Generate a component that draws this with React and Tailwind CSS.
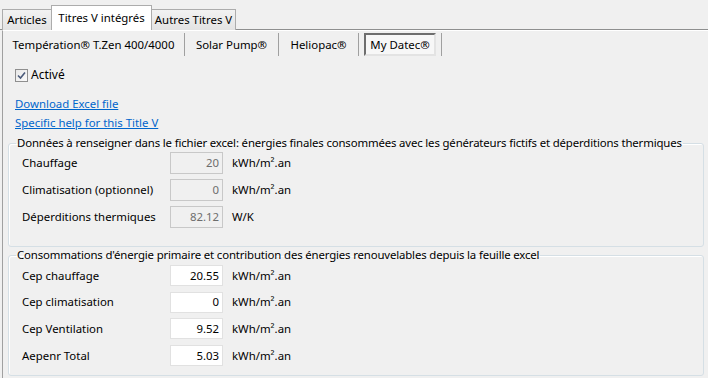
import React from "react";

function Field({ label, value, unit, disabled, h }) {
  return (
    <div className={`flex items-center ${h}`}>
      <div className="w-[148px] shrink-0">{label}</div>
      <div
        className={`w-[53px] h-full flex items-center justify-end pr-[3px] border ${
          disabled
            ? "bg-[#f0f0f0] border-[#c8c8c8] text-[#6d6d6d]"
            : "bg-white border-[#e1e1e1] text-black"
        }`}
      >
        {value}
      </div>
      <div className="ml-[9px]">{unit}</div>
    </div>
  );
}

export default function App() {
  const font = { fontFamily: '"Noto Sans", "Open Sans", sans-serif' };
  return (
    <div
      className="w-[708px] h-[378px] bg-[#f0f0f0] overflow-hidden text-[11.4px] text-black leading-[16px] flex flex-col"
      style={font}
    >
      {/* Top tabs */}
      <div className="h-[30px] shrink-0 flex items-end pl-[2px] border-b border-[#8e8f8f]">
        <div className="w-[50px] h-[21px] -mb-px flex items-center justify-center border border-b-0 border-[#acacac] bg-gradient-to-b from-[#f2f2f2] to-[#e3e3e3]">
          Articles
        </div>
        <div className="w-[101px] h-[25px] -mb-px flex items-center justify-center border border-b-0 border-[#acacac] bg-white relative z-10 -mx-px">
          Titres V intégrés
        </div>
        <div className="w-[85px] h-[21px] -mb-px flex items-center justify-center border border-b-0 border-[#acacac] bg-gradient-to-b from-[#f2f2f2] to-[#e3e3e3]">
          Autres Titres V
        </div>
      </div>

      {/* Panel */}
      <div className="flex-1 ml-[2px] border-l border-[#a0a0a0] border-t border-t-white flex flex-col">
        {/* Sub tabs */}
        <div className="flex h-[23px] mt-[2px] shrink-0">
          <div className="w-[182px] flex items-center justify-center border-r border-[#a0a0a0]">
            Températion® T.Zen 400/4000
          </div>
          <div className="w-[94px] flex items-center justify-center border-r border-[#a0a0a0]">
            Solar Pump®
          </div>
          <div className="w-[80px] flex items-center justify-center border-r border-[#a0a0a0]">
            Heliopac®
          </div>
          <div className="w-[83px] flex items-center justify-center border-r border-[#a0a0a0]">
            <div className="w-[72px] h-[23px] flex items-center justify-center border-2 border-t-[#6e6e6e] border-l-[#6e6e6e] border-r-[#e3e3e3] border-b-[#e3e3e3] bg-[#f7f7f7]">
              My Datec®
            </div>
          </div>
        </div>

        {/* Checkbox */}
        <div className="flex items-center mt-[12px] ml-[12px] h-[14px]">
          <div className="w-[13px] h-[13px] border border-[#8f8f8f] bg-gradient-to-br from-[#e8e8e8] to-[#fafafa] flex items-center justify-center">
            <svg width="9" height="9" viewBox="0 0 9 9">
              <path d="M1 4.5 L3.5 7 L8 1.5" fill="none" stroke="#4a5a7a" strokeWidth="1.6" />
            </svg>
          </div>
          <span className="ml-[3px] text-[12px]">Activé</span>
        </div>

        {/* Links */}
        <div className="ml-[12px] mt-[14px] flex flex-col gap-[3px] text-[#0066cc]">
          <span className="underline h-[16px]">Download Excel file </span>
          <span className="underline h-[16px]">Specific help for this Title V</span>
        </div>

        {/* Group 1 */}
        <fieldset className="mt-[4px] ml-[5px] mr-[4px] border border-[#d5dfe5] rounded-[3px] pb-[18px] shadow-[inset_1px_1px_0_#fff]">
          <legend className="ml-[7px] px-[1px] h-[16px] whitespace-nowrap tracking-[-0.15px]">
            Données à renseigner dans le fichier excel: énergies finales consommées avec les générateurs fictifs et déperditions thermiques
          </legend>
          <div className="flex flex-col gap-[5px] mt-[1px] pl-[13px]">
            <Field label="Chauffage" value="20" unit="kWh/m².an" disabled h="h-[22px]" />
            <Field label="Climatisation (optionnel)" value="0" unit="kWh/m².an" disabled h="h-[22px]" />
            <Field label="Déperditions thermiques" value="82.12" unit="W/K" disabled h="h-[22px]" />
          </div>
        </fieldset>

        {/* Group 2 */}
        <fieldset className="ml-[5px] mr-[4px] border border-[#d5dfe5] rounded-[3px] pb-[9px] shadow-[inset_1px_1px_0_#fff]">
          <legend className="ml-[7px] px-[1px] h-[16px] whitespace-nowrap tracking-[-0.15px]">
            Consommations d'énergie primaire et contribution des énergies renouvelables depuis la feuille excel
          </legend>
          <div className="flex flex-col gap-[5.7px] mt-[2px] pl-[13px]">
            <Field label="Cep chauffage" value="20.55" unit="kWh/m².an" h="h-[21px]" />
            <Field label="Cep climatisation" value="0" unit="kWh/m².an" h="h-[21px]" />
            <Field label="Cep Ventilation" value="9.52" unit="kWh/m².an" h="h-[21px]" />
            <Field label="Aepenr Total" value="5.03" unit="kWh/m².an" h="h-[21px]" />
          </div>
        </fieldset>
      </div>
    </div>
  );
}
